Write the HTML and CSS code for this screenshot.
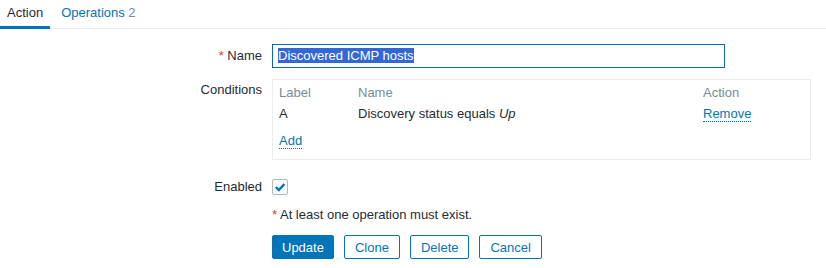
FILE: index.html
```html
<!DOCTYPE html>
<html lang="en">
<head>
    <meta charset="UTF-8">
    <title>Action</title>
    <link rel="stylesheet" href="styles.css">
</head>
<body>
    <ul class="tabs">
        <li class="tab active">Action</li>
        <li class="tab">Operations <span class="count">2</span></li>
    </ul>

    <div class="form">
        <div class="label"><span class="req">*</span> Name</div>
        <div class="field">
            <div class="input"><span class="sel">Discovered ICMP hosts</span></div>
        </div>

        <div class="label label-top row-cond">Conditions</div>
        <div class="field row-cond">
            <div class="cond-box">
                <div class="cond-grid">
                    <div class="th">Label</div>
                    <div class="th">Name</div>
                    <div class="th">Action</div>
                    <div class="td">A</div>
                    <div class="td">Discovery status equals <i>Up</i></div>
                    <div class="td"><a class="link">Remove</a></div>
                </div>
                <div class="add"><a class="link">Add</a></div>
            </div>
        </div>

        <div class="label row-enabled">Enabled</div>
        <div class="field row-enabled">
            <span class="checkbox">
                <svg width="14" height="14" viewBox="0 0 14 14"><path d="M2.8 7 L5.8 10 L11.4 4.2" fill="none" stroke="#0275b8" stroke-width="2.4"/></svg>
            </span>
        </div>

        <div class="label row-note"></div>
        <div class="field row-note note"><span class="req">*</span> At least one operation must exist.</div>

        <div class="label row-buttons"></div>
        <div class="field row-buttons buttons">
            <button class="btn primary">Update</button>
            <button class="btn">Clone</button>
            <button class="btn">Delete</button>
            <button class="btn">Cancel</button>
        </div>
    </div>
</body>
</html>
```

FILE: styles.css
```css
body { margin: 0; background: #fff; color: #1f2c33; font-family: "Liberation Sans", Arial, sans-serif; font-size: 13px; }

.tabs { list-style: none; margin: 0; padding: 0; display: flex; border-bottom: 1px solid #ebeef0; height: 28px; }
.tab { height: 26px; line-height: 26px; padding: 0 7px; margin-right: 4px; color: #0275b8; border-bottom: 3px solid transparent; }
.tab.active { color: #1f2c33; border-bottom-color: #0275b8; }
.count { color: #768d99; }

.form { display: grid; grid-template-columns: 262px 539px; column-gap: 10px; padding-top: 15px; }
.label { text-align: right; line-height: 24px; }
.label-top { line-height: 14px; padding-top: 4px; }
.req { color: #e33734; }
.field { min-height: 24px; }

.input { width: 453px; height: 24px; box-sizing: border-box; border: 1px solid #0b6aa8; padding: 0 5px; line-height: 22px; }
.sel { background: #3367d6; color: #fff; }

.row-cond { margin-top: 11px; }
.cond-box { border: 1px solid #ebeef0; padding: 0 6px 10px; }
.cond-grid { display: grid; grid-template-columns: 79px 1fr 101px; }
.th { color: #768d99; line-height: 26px; }
.td { line-height: 16px; }
.add { margin-top: 11px; line-height: 16px; }
.link { color: #0275b8; border-bottom: 1px dotted #0275b8; cursor: pointer; }

.row-enabled { margin-top: 15px; }
.row-enabled.label { line-height: 16px; margin-top: 19px; }
.checkbox { display: flex; align-items: center; justify-content: center; width: 16px; height: 16px; box-sizing: border-box; border: 1px solid #acbbc2; border-radius: 2px; margin-top: 4px; }

.row-note { margin-top: 8px; line-height: 16px; min-height: 16px; }

.row-buttons { margin-top: 12px; }
.buttons { display: flex; gap: 10px; }
.btn { height: 24px; padding: 0 10px; border: 1px solid #0275b8; border-radius: 2px; background: #fff; color: #0275b8; font-family: "Liberation Sans", Arial, sans-serif; font-size: 13px; cursor: pointer; }
.btn.primary { background: #0275b8; color: #fff; padding: 0 9px; }
```
